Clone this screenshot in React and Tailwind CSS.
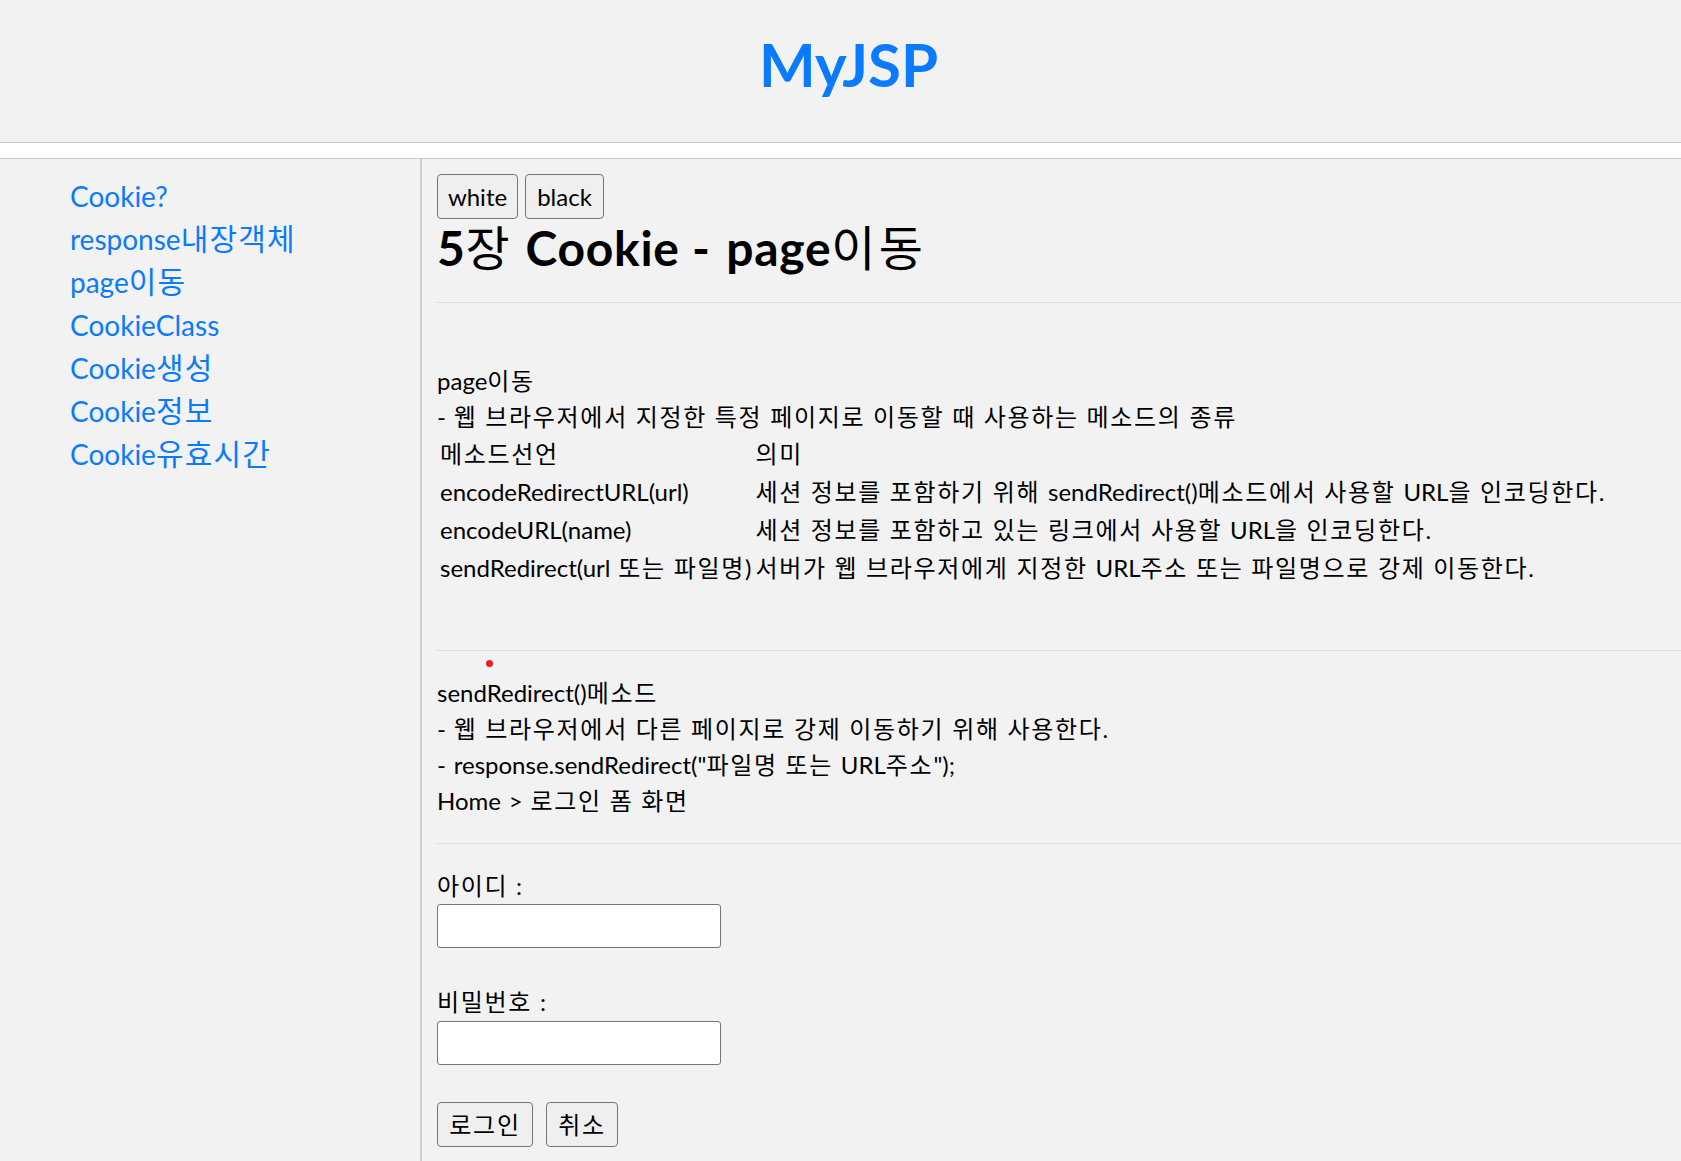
const menu = ['Cookie?', 'response내장객체', 'page이동', 'CookieClass', 'Cookie생성', 'Cookie정보', 'Cookie유효시간'];

const methods = [
  ['메소드선언', '의미'],
  ['encodeRedirectURL(url)', '세션 정보를 포함하기 위해 sendRedirect()메소드에서 사용할 URL을 인코딩한다.'],
  ['encodeURL(name)', '세션 정보를 포함하고 있는 링크에서 사용할 URL을 인코딩한다.'],
  ['sendRedirect(url 또는 파일명)', '서버가 웹 브라우저에게 지정한 URL주소 또는 파일명으로 강제 이동한다.'],
];

// hangul runs (and spaces) get a little extra spacing, closer to the original font
function K({ children, t = 'tracking-[0.07em]' }) {
  const parts = String(children).split(/([\uAC00-\uD7A3 ]+)/);
  return parts.map((p, i) =>
    i % 2 === 1 ? (
      <span key={i} className={t}>{p}</span>
    ) : (
      p
    )
  );
}

function Btn({ children, w }) {
  return (
    <button className={`h-[45px] ${w} bg-[#efefef] border border-[#767676] rounded-[4px] text-[24px] leading-[30px] text-black`}>
      <K>{children}</K>
    </button>
  );
}

export default function App() {
  return (
    <div className="min-h-screen flex flex-col bg-[#f2f2f2] text-black text-[24px] font-['Lato','Noto_Sans_CJK_KR',sans-serif]">
      {/* header */}
      <header className="h-[143px] border-b border-[#cccccc] pt-[28px] pl-[16px] text-center">
        <h1 className="text-[60px] leading-[72px] font-bold text-[#0a7bff]">MyJSP</h1>
      </header>
      <nav className="h-[16px] bg-white border-b border-[#cccccc]" />

      <div className="flex flex-1">
        {/* sidebar */}
        <aside className="w-[422px] shrink-0 border-r-2 border-[#cfcfcf] pt-[16px] pl-[70px]">
          <ul className="text-[28px]">
            {menu.map((m) => (
              <li key={m} className="h-[43px] leading-[43px]">
                <a href="#" className="text-[#0a7bff]"><K t="text-[30px] leading-[0] tracking-[0.04em]">{m}</K></a>
              </li>
            ))}
          </ul>
        </aside>

        {/* content */}
        <main className="flex-1 pt-[15px] pl-[15px] leading-[36px]">
          <div className="flex gap-[7px]">
            <Btn w="w-[81px]">white</Btn>
            <Btn w="w-[79px]">black</Btn>
          </div>
          <h2 className="text-[48px] leading-[58px] font-bold whitespace-nowrap tracking-[0.015em]">
            5<span className="font-normal tracking-[0.07em]">장</span> Cookie <span className="tracking-[0.08em]">-</span> page<span className="font-normal tracking-[0.07em]">이동</span>
          </h2>
          <hr className="mt-[25px] border-t border-[#dddddd]" />

          <div className="mt-[60px]">
            <p><K>page이동</K></p>
            <p><K>- 웹 브라우저에서 지정한 특정 페이지로 이동할 때 사용하는 메소드의 종류</K></p>
          </div>
          <div className="grid grid-cols-[auto_1fr] gap-x-[4px] pl-[3px] leading-[38px]">
            {methods.map(([a, b]) => (
              <div key={a} className="contents">
                <div className="h-[38px] whitespace-nowrap"><K>{a}</K></div>
                <div className="h-[38px] whitespace-nowrap"><K>{b}</K></div>
              </div>
            ))}
          </div>

          <hr className="mt-[63px] border-t border-[#dddddd]" />
          <div className="mt-[9px] ml-[49px] w-[7px] h-[7px] rounded-full bg-[#ec1c24]" />
          <div className="mt-[8px]">
            <p><K>sendRedirect()메소드</K></p>
            <p><K>- 웹 브라우저에서 다른 페이지로 강제 이동하기 위해 사용한다.</K></p>
            <p><K>- response.sendRedirect("파일명 또는 URL주소");</K></p>
            <p><K>Home &gt; 로그인 폼 화면</K></p>
          </div>

          <hr className="mt-[24px] border-t border-[#dddddd]" />
          <form className="mt-[24px]" onSubmit={(e) => e.preventDefault()}>
            <p><K>아이디 :</K></p>
            <input type="text" className="block w-[284px] h-[44px] bg-white border border-[#767676] rounded-[3px]" />
            <p className="mt-[36px]"><K>비밀번호 :</K></p>
            <input type="password" className="block mt-[1px] w-[284px] h-[44px] bg-white border border-[#767676] rounded-[3px]" />
            <div className="mt-[37px] flex gap-[13px]">
              <Btn w="w-[96px]">로그인</Btn>
              <Btn w="w-[72px]">취소</Btn>
            </div>
          </form>
        </main>
      </div>
    </div>
  );
}
